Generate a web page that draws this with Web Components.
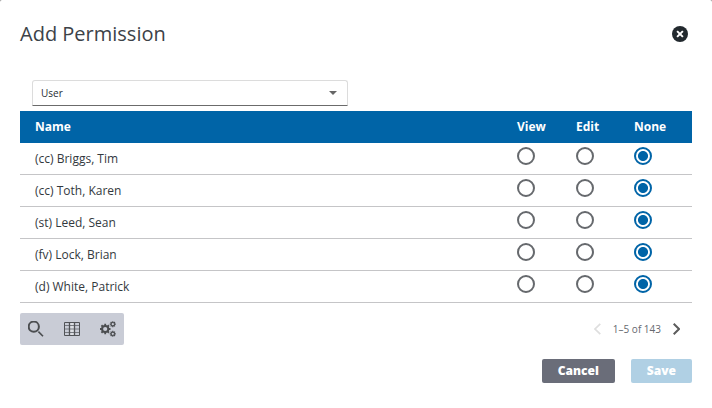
<!DOCTYPE html>
<html lang="en">
<head>
<meta charset="utf-8">
<meta name="viewport" content="width=device-width, initial-scale=1">
<title>Add Permission</title>
<style>
  html { background: #8c8c8c; }
  body {
    margin: 0;
    font-family: "Open Sans", "Noto Sans", sans-serif;
    font-size: 12px;
    color: #33393e;
    --blue: #0064a7;
    --slate: #6a6d79;
    --rule: #c5c5c7;
  }
</style>
</head>
<body>
<permission-dialog>
  <dialog-header slot="header">Add Permission</dialog-header>
  <type-select></type-select>
  <permission-table></permission-table>
  <table-tools slot="tools"></table-tools>
  <page-nav slot="tools" range="1–5 of 143"></page-nav>
  <action-button slot="actions" kind="secondary">Cancel</action-button>
  <action-button slot="actions" disabled>Save</action-button>
</permission-dialog>

<script>
class ShadowElement extends HTMLElement {
  constructor() {
    super();
    this.attachShadow({ mode: "open" });
  }
  connectedCallback() {
    const t = document.createElement("template");
    t.innerHTML = "<style>*{box-sizing:border-box}button{font:inherit;border:0;background:none;padding:0;cursor:pointer}svg{display:block}</style>" + this.markup();
    this.shadowRoot.replaceChildren(t.content.cloneNode(true));
  }
}

customElements.define("permission-dialog", class extends ShadowElement {
  markup() {
    return `
    <style>
      :host { display: block; }
      section { background: #fff; border-radius: 2px 2px 0 0; min-height: 100vh; padding: 20px; }
      .tools { display: flex; justify-content: space-between; align-items: center; margin-top: 10px; }
      .actions { display: flex; justify-content: flex-end; gap: 16px; margin-top: 14px; }
    </style>
    <section role="dialog" aria-label="Add Permission">
      <slot name="header"></slot>
      <slot></slot>
      <div class="tools"><slot name="tools"></slot></div>
      <div class="actions"><slot name="actions"></slot></div>
    </section>`;
  }
});

customElements.define("dialog-header", class extends ShadowElement {
  markup() {
    return `
    <style>
      :host { display: flex; justify-content: space-between; align-items: center; padding-right: 4px; }
      h1 { margin: 0; font-size: 20px; line-height: 28px; font-weight: 400; color: #3c4248; }
    </style>
    <h1><slot></slot></h1>
    <button type="button" aria-label="Close">
      <svg width="16" height="16" viewBox="0 0 16 16"><circle cx="8" cy="8" r="8" fill="#22292e"/><path d="M5.1 5.1l5.8 5.8M10.9 5.1l-5.8 5.8" stroke="#fff" stroke-width="2"/></svg>
    </button>`;
  }
});

customElements.define("type-select", class extends ShadowElement {
  markup() {
    return `
    <style>
      :host { display: block; margin: 32px 12px 5px; }
      label { display: grid; width: 50%; align-items: center; max-width: 316px; }
      select, svg { grid-area: 1 / 1; }
      select {
        appearance: none; width: 100%; height: 26px; padding: 0 8px;
        border: 1px solid #dcdcdc; border-bottom-color: #6b6b6b; border-radius: 3px 3px 0 0;
        background: #fff; color: #262c31; font: 10px/16px "Open Sans", "Noto Sans", sans-serif;
      }
      svg { justify-self: end; margin-right: 11px; pointer-events: none; }
    </style>
    <label>
      <select aria-label="Permission type"><option>User</option><option>Group</option></select>
      <svg width="8" height="4" viewBox="0 0 8 4"><path d="M0 0h8L4 4z" fill="#666"/></svg>
    </label>`;
  }
});

customElements.define("permission-table", class extends ShadowElement {
  markup() {
    const names = ["(cc) Briggs, Tim", "(cc) Toth, Karen", "(st) Leed, Sean", "(fv) Lock, Brian", "(d) White, Patrick"];
    const levels = ["View", "Edit", "None"];
    const rows = names.map((name, i) => `<tr><th scope="row">${name}</th>${levels.map(level =>
      `<td><input type="radio" name="row${i}" aria-label="${name}: ${level}"${level === "None" ? " checked" : ""}></td>`).join("")}</tr>`).join("");
    return `
    <style>
      :host { display: block; }
      table { width: 100%; border-collapse: separate; border-spacing: 0; table-layout: fixed; }
      th, td { height: 32px; padding: 0; text-align: left; line-height: 16px; }
      th:first-child { padding-left: 15px; }
      thead th { background: var(--blue); color: #fff; font-weight: 700; }
      tbody th { font-weight: 400; }
      tbody th, td { border-bottom: 1px solid var(--rule); }
      td { vertical-align: top; padding-top: 4px; }
      .level { width: 58px; }
      .first { width: 59px; }
      input {
        appearance: none; display: block; margin: 0; width: 18px; height: 18px;
        border: 2px solid #66696d; border-radius: 50%; background: #fff;
      }
      input:checked { border-color: var(--blue); background: radial-gradient(circle, var(--blue) 4.6px, #fff 5.4px); }
    </style>
    <table>
      <thead><tr><th scope="col">Name</th>${levels.map((l, i) => `<th scope="col" class="${i ? "level" : "first"}">${l}</th>`).join("")}</tr></thead>
      <tbody>${rows}</tbody>
    </table>`;
  }
});

customElements.define("table-tools", class extends ShadowElement {
  gear(cx, cy, r, ring, tooth) {
    let d = "";
    for (let i = 0; i < 8; i++) {
      const a = i * Math.PI / 4;
      const outer = r + ring / 2 + tooth;
      d += `M${(cx + Math.cos(a) * r).toFixed(2)} ${(cy + Math.sin(a) * r).toFixed(2)}L${(cx + Math.cos(a) * outer).toFixed(2)} ${(cy + Math.sin(a) * outer).toFixed(2)}`;
    }
    return `<circle cx="${cx}" cy="${cy}" r="${r}" stroke-width="${ring}"/><path d="${d}" stroke-width="${tooth * 1.5}"/>`;
  }
  markup() {
    return `
    <style>
      :host { display: flex; gap: 20px; padding: 8px; background: #c9ccd6; border-radius: 2px; }
    </style>
    <button type="button" aria-label="Search">
      <svg width="16" height="16" viewBox="0 0 16 16" fill="none" stroke="#4b4d50"><circle cx="5.8" cy="5.7" r="5.1" stroke-width="2"/><path d="M10.4 10.6l4.6 4.6" stroke-width="1.6"/></svg>
    </button>
    <button type="button" aria-label="Columns">
      <svg width="16" height="16" viewBox="0 0 16 16" fill="none" stroke="#505256"><path d="M5.5 1.5h5v13h-5z" fill="#dcdee3" stroke="none"/><path d="M1 4.5h14M1 8h14M1 11.5h14" stroke="#777a80"/><path d="M.5 1.5h15v13H.5z"/><path d="M5.5 2v12M10.5 2v12" stroke-width="1.3"/></svg>
    </button>
    <button type="button" aria-label="Settings">
      <svg width="16" height="16" viewBox="0 0 16 16" fill="none" stroke="#4b4d50">${this.gear(5.2, 8, 3.1, 2, 1.2)}${this.gear(12.8, 3.2, 1.7, 1.1, .8)}${this.gear(12.8, 12.8, 1.7, 1.1, .8)}</svg>
    </button>`;
  }
});

customElements.define("page-nav", class extends ShadowElement {
  markup() {
    return `
    <style>
      :host { display: flex; align-items: center; gap: 12px; padding-right: 12px; font-size: 10px; line-height: 16px; color: #66696f; }
    </style>
    <button type="button" aria-label="Previous page" disabled>
      <svg width="7" height="12" viewBox="0 0 7 12" fill="none" stroke="#dedede" stroke-width="1.7"><path d="M6.3.8L1 6l5.3 5.2"/></svg>
    </button>
    <span>${this.getAttribute("range")}</span>
    <button type="button" aria-label="Next page">
      <svg width="7" height="12" viewBox="0 0 7 12" fill="none" stroke="#5c5c5c" stroke-width="2"><path d="M.7.8L6 6 .7 11.2"/></svg>
    </button>`;
  }
});

customElements.define("action-button", class extends ShadowElement {
  markup() {
    return `
    <style>
      :host { display: block; }
      button { display: block; height: 24px; padding: 0 16px; border-radius: 2px; background: var(--blue); color: #fff; font-weight: 800; line-height: 24px; }
      button:disabled { background: #b0d0e4; }
      :host([kind="secondary"]) button { background: var(--slate); }
    </style>
    <button type="button"${this.hasAttribute("disabled") ? " disabled" : ""}><slot></slot></button>`;
  }
});
</script>
</body>
</html>
